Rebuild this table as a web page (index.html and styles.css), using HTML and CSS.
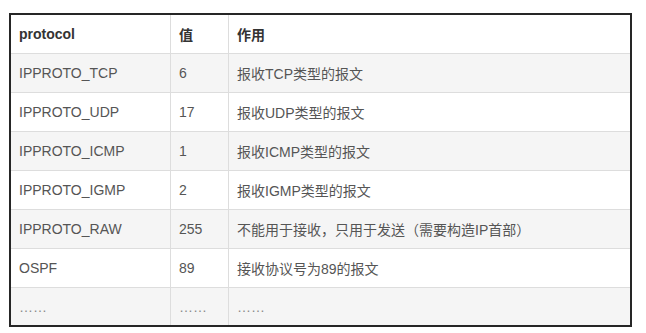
FILE: index.html
```html
<!DOCTYPE html>
<html lang="zh">
<head>
<meta charset="utf-8">
<title>protocol</title>
<link rel="stylesheet" href="styles.css">
</head>
<body>
<table class="proto-table">
  <colgroup>
    <col class="c1">
    <col class="c2">
    <col class="c3">
  </colgroup>
  <thead>
    <tr><th>protocol</th><th>值</th><th>作用</th></tr>
  </thead>
  <tbody>
    <tr><td>IPPROTO_TCP</td><td>6</td><td>报收TCP类型的报文</td></tr>
    <tr><td>IPPROTO_UDP</td><td>17</td><td>报收UDP类型的报文</td></tr>
    <tr><td>IPPROTO_ICMP</td><td>1</td><td>报收ICMP类型的报文</td></tr>
    <tr><td>IPPROTO_IGMP</td><td>2</td><td>报收IGMP类型的报文</td></tr>
    <tr><td>IPPROTO_RAW</td><td>255</td><td>不能用于接收，只用于发送（需要构造IP首部）</td></tr>
    <tr><td>OSPF</td><td>89</td><td>接收协议号为89的报文</td></tr>
    <tr class="last"><td class="dots">……</td><td class="dots">……</td><td class="dots">……</td></tr>
  </tbody>
</table>
</body>
</html>
```

FILE: styles.css
```css
html, body {
  margin: 0;
  background: #ffffff;
}
body {
  padding: 13px 0 0 9px;
  font-family: "Liberation Sans", Arial, "Noto Sans CJK SC", sans-serif;
  font-size: 14px;
  color: #555555;
}
.proto-table {
  width: 623px;
  table-layout: fixed;
  border-collapse: separate;
  border-spacing: 0;
  border: 2px solid #262626;
}
.c1 { width: 160px; }
.c2 { width: 58px; }
.proto-table th,
.proto-table td {
  height: 39px;
  padding: 0 8px;
  text-align: left;
  vertical-align: middle;
  border-right: 1px solid #dddddd;
  border-bottom: 1px solid #dddddd;
  white-space: nowrap;
  box-sizing: border-box;
}
.proto-table th:last-child,
.proto-table td:last-child {
  border-right: 0;
}
.proto-table tr.last td {
  border-bottom: 0;
  height: 37px;
}
.proto-table th {
  color: #333333;
  font-weight: bold;
  background: #ffffff;
}
.proto-table tbody tr:nth-child(odd) td {
  background: #f5f5f5;
}
.proto-table tbody tr:nth-child(even) td {
  background: #ffffff;
}
.dots {
  color: #8a8a8a;
}
```
